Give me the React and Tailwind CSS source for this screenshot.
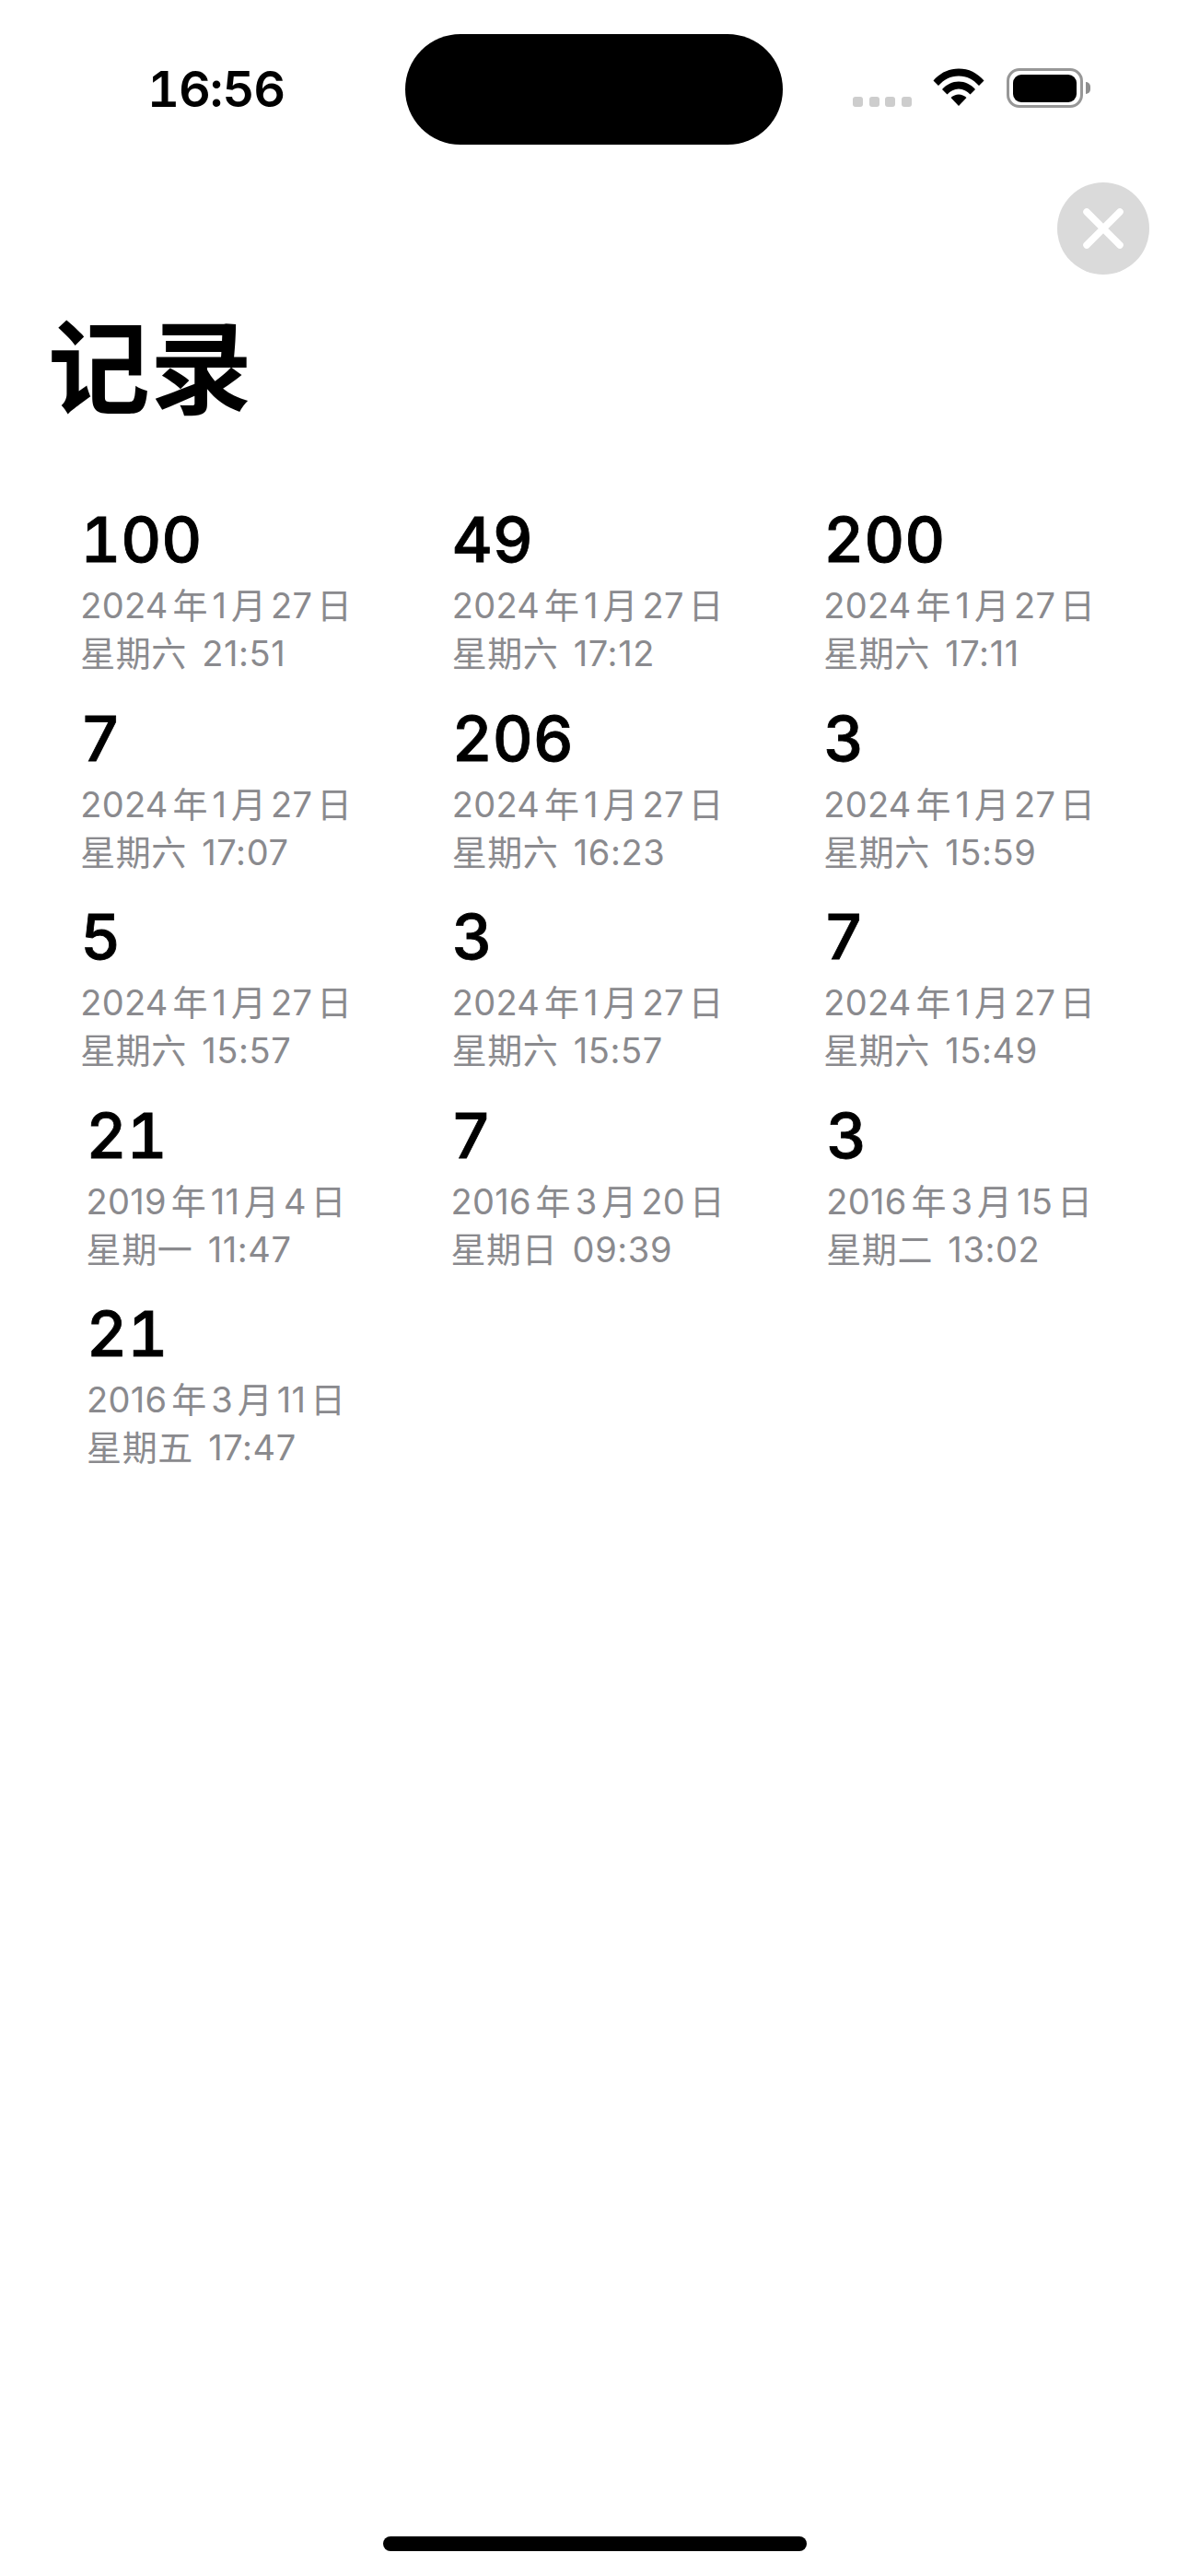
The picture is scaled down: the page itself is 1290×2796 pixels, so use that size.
const records = [
  ["100", "2024年1月27日", "星期六 21:51"],
  ["49", "2024年1月27日", "星期六 17:12"],
  ["200", "2024年1月27日", "星期六 17:11"],
  ["7", "2024年1月27日", "星期六 17:07"],
  ["206", "2024年1月27日", "星期六 16:23"],
  ["3", "2024年1月27日", "星期六 15:59"],
  ["5", "2024年1月27日", "星期六 15:57"],
  ["3", "2024年1月27日", "星期六 15:57"],
  ["7", "2024年1月27日", "星期六 15:49"],
  ["21", "2019年11月4日", "星期一 11:47"],
  ["7", "2016年3月20日", "星期日 09:39"],
  ["3", "2016年3月15日", "星期二 13:02"],
  ["21", "2016年3月11日", "星期五 17:47"],
];

function Wifi() {
  return (
    <svg width="56" height="42" viewBox="0 0 56 42" className="mt-[-1px]">
      <path d="M0.5 13.5 C8 5 17 0.5 28 0.5 C39 0.5 48 5 55.5 13.5 L50 19 C44 12.5 37 8.5 28 8.5 C19 8.5 12 12.5 6 19 Z" fill="#000" />
      <path d="M10 23 C15 17.5 21 14.5 28 14.5 C35 14.5 41 17.5 46 23 L40.5 28.5 C37 25 33 22.5 28 22.5 C23 22.5 19 25 15.5 28.5 Z" fill="#000" />
      <path d="M19.5 32 C22 29.8 25 28.5 28 28.5 C31 28.5 34 29.8 36.5 32 L28 41 Z" fill="#000" />
    </svg>
  );
}

function Battery() {
  return (
    <div className="flex items-center">
      <div className="flex h-[43px] w-[83px] items-center justify-center rounded-[14px] border-[3px] border-[#979797] bg-white">
        <div className="h-[30px] w-[69px] rounded-[9px] bg-black" />
      </div>
      <div className="ml-[3px] h-[13px] w-[5px] rounded-r-full bg-[#8e8e8e]" />
    </div>
  );
}

function Record({ value, date, time }) {
  return (
    <div className="justify-self-center">
      <div className="h-[84px] text-[68px] leading-[84px] font-medium text-black tabular-nums [-webkit-text-stroke:0.8px_#000]">{value}</div>
      <div className="mt-[4px] text-[38px] leading-[52px] tracking-[0.3px] whitespace-nowrap text-[#8a8a8e] [text-autospace:normal]">{date}</div>
      <div className="text-[38px] leading-[52px] tracking-[0.6px] whitespace-nowrap text-[#8a8a8e] [word-spacing:5px]">{time}</div>
    </div>
  );
}

export default function App() {
  return (
    <div className="flex h-[2796px] w-[1290px] flex-col overflow-hidden bg-white font-['Inter','Noto_Sans_CJK_SC',sans-serif]">
      <div className="relative flex h-[198px] shrink-0 items-start">
        <div className="mt-[66px] ml-[160px] w-[153px] text-[54px] leading-[62px] font-semibold tracking-[-1px] text-black tabular-nums">16:56</div>
        <div className="mt-[37px] ml-[126.5px] h-[120px] w-[410px] rounded-full bg-black" />
        <div className="mt-[105px] ml-[76.5px] flex gap-[6.5px]">
          {[0, 1, 2, 3].map((i) => (
            <div key={i} className="h-[11px] w-[11px] rounded-[3px] bg-[#cdcdcd]" />
          ))}
        </div>
        <div className="mt-[75px] ml-[23.5px]"><Wifi /></div>
        <div className="mt-[74px] ml-[24px]"><Battery /></div>
      </div>

      <div className="flex justify-end pr-[42px]">
        <button className="flex h-[100px] w-[100px] items-center justify-center rounded-full bg-[#dadada]">
          <svg width="48" height="48" viewBox="0 0 48 48">
            <path d="M6 6 L42 42 M42 6 L6 42" stroke="#fff" strokeWidth="7.5" strokeLinecap="round" fill="none" />
          </svg>
        </button>
      </div>

      <h1 className="mt-[28px] ml-[52px] h-[150px] text-[111px] leading-[150px] font-bold text-black">记录</h1>

      <div className="mt-[67px] grid grid-cols-[repeat(3,403.5px)] gap-y-[23.5px] pl-[33px]">
        {records.map((r, i) => (
          <Record key={i} value={r[0]} date={r[1]} time={r[2]} />
        ))}
      </div>

      <div className="mt-auto mb-[27px] ml-[416px] h-[16px] w-[460px] rounded-full bg-black" />
    </div>
  );
}
